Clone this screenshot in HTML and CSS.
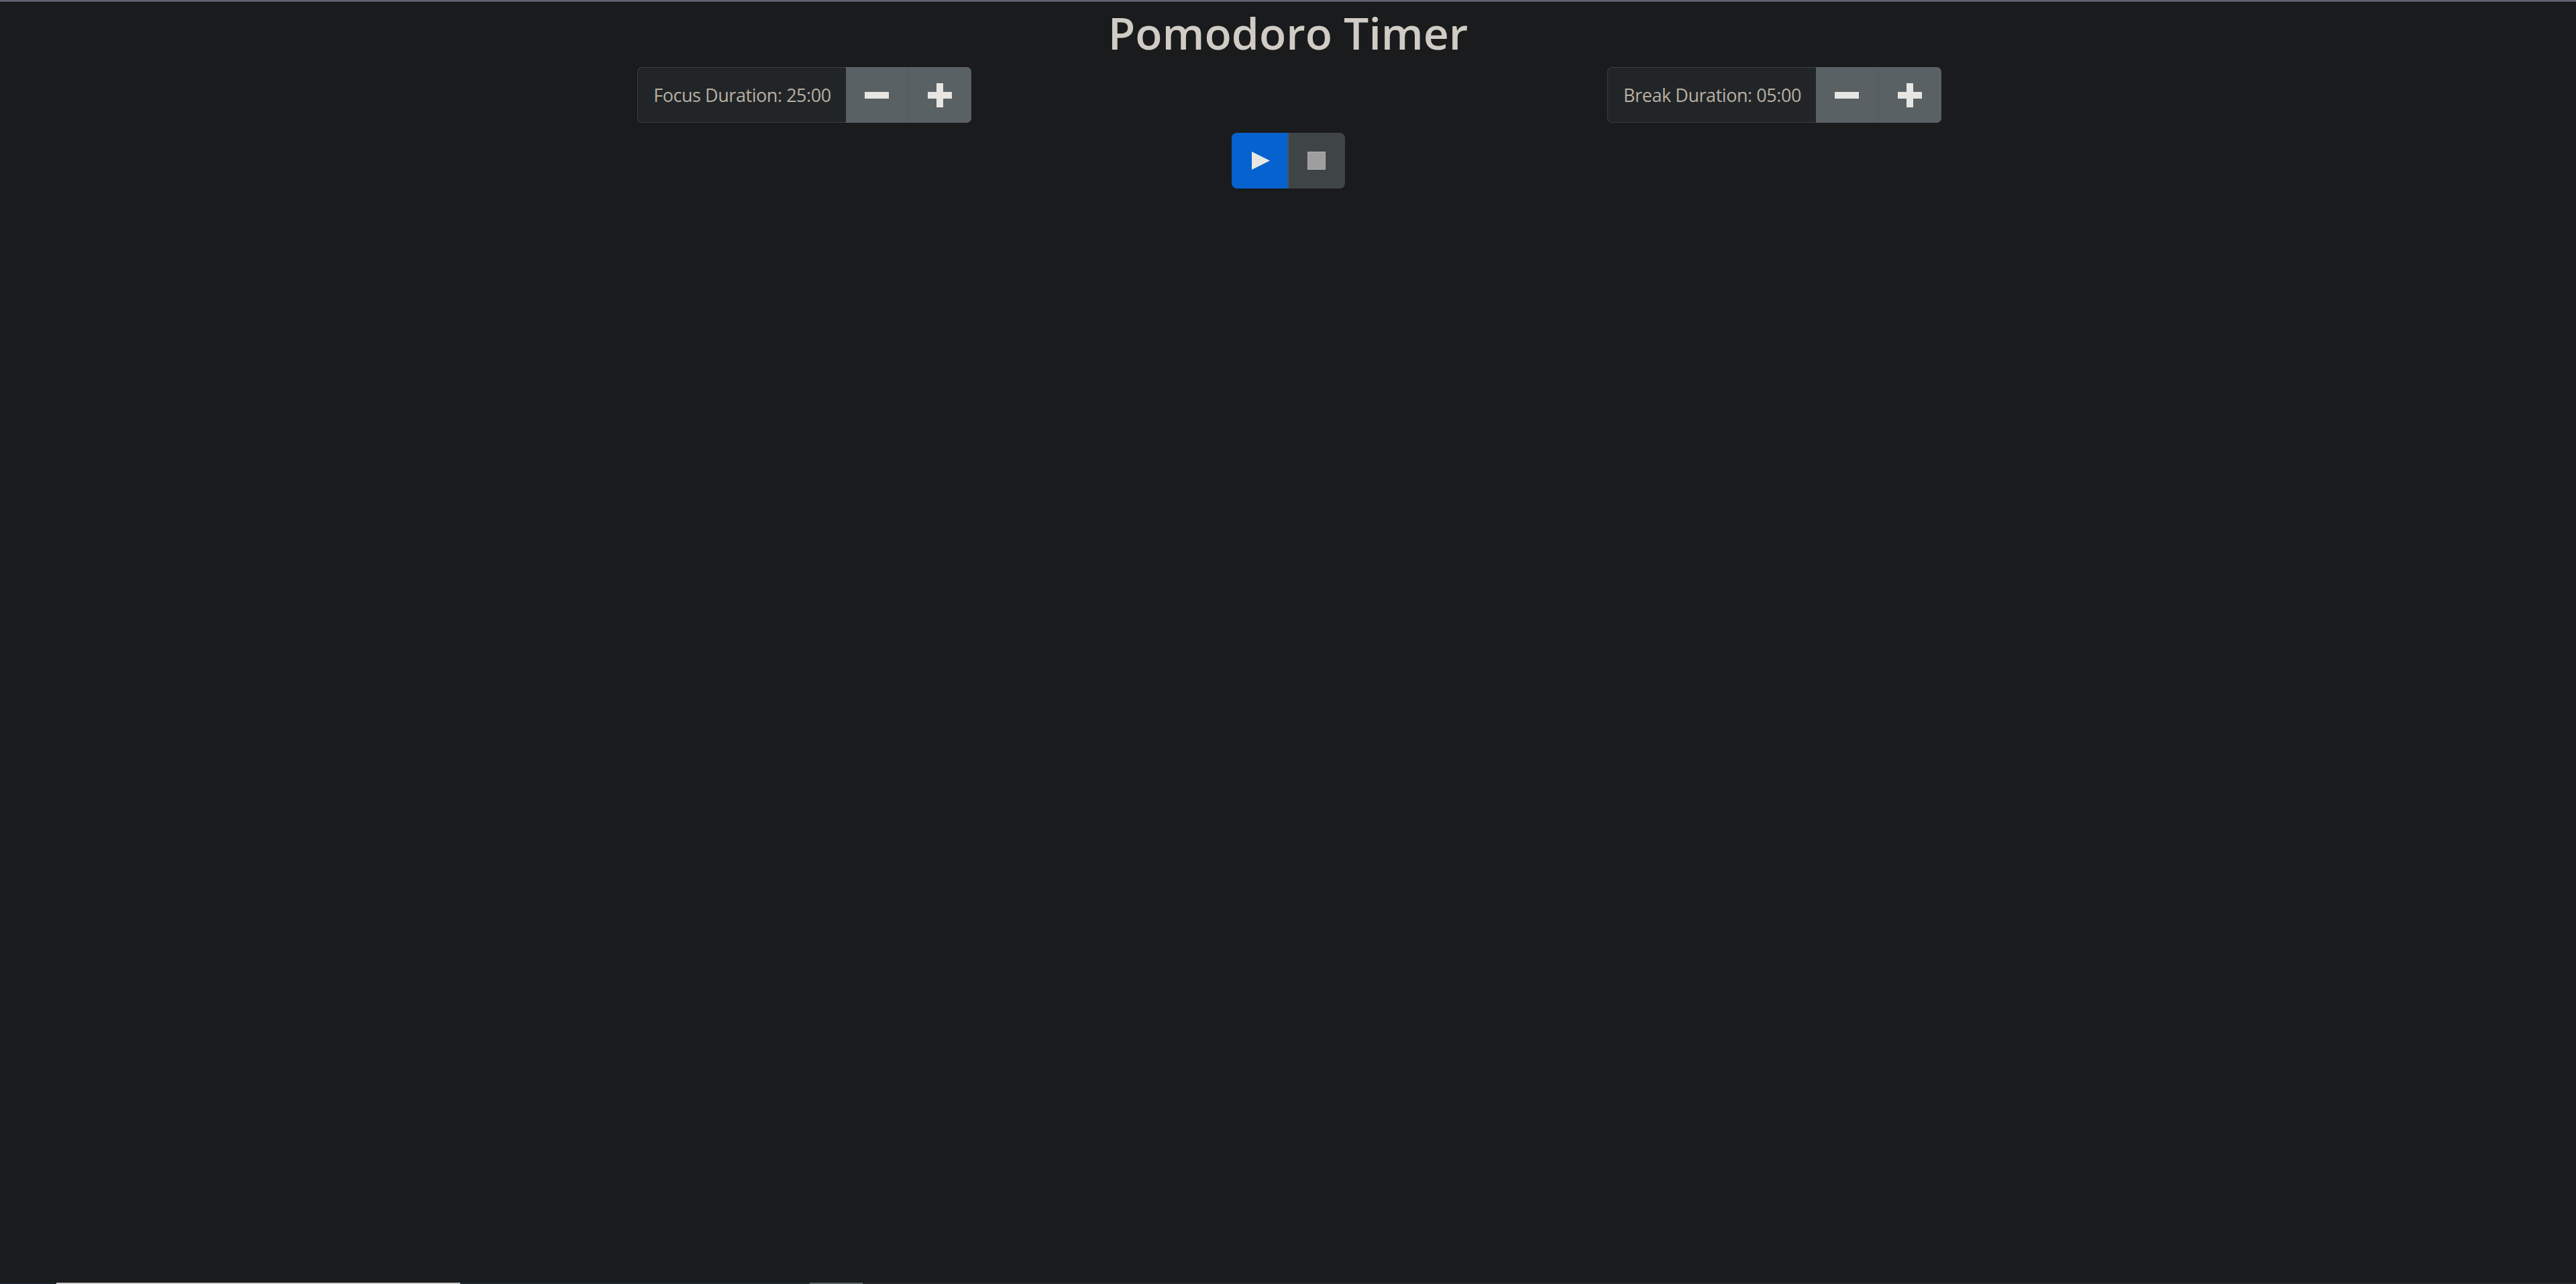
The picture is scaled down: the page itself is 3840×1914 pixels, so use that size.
FILE: index.html
```html
<!DOCTYPE html>
<html lang="en">
<head>
<meta charset="utf-8">
<title>Pomodoro Timer</title>
<link rel="stylesheet" href="styles.css">
</head>
<body>
<div class="topline"></div>
<main class="app">
  <h1 class="title">Pomodoro Timer</h1>
  <div class="settings">
    <div class="cell">
      <div class="group">
        <span class="label">Focus Duration: 25:00</span>
        <button class="btn btn-adj" aria-label="decrease"><svg viewBox="0 0 36 36" class="ico"><rect x="0" y="13" width="37" height="10" fill="currentColor"/></svg></button>
        <button class="btn btn-adj btn-last" aria-label="increase"><svg viewBox="0 0 36 36" class="ico"><rect x="0" y="13" width="36" height="10" fill="currentColor"/><rect x="13" y="0" width="10" height="36" fill="currentColor"/></svg></button>
      </div>
    </div>
    <div class="cell">
      <div class="group">
        <span class="label">Break Duration: 05:00</span>
        <button class="btn btn-adj" aria-label="decrease"><svg viewBox="0 0 36 36" class="ico"><rect x="0" y="13" width="37" height="10" fill="currentColor"/></svg></button>
        <button class="btn btn-adj btn-last" aria-label="increase"><svg viewBox="0 0 36 36" class="ico"><rect x="0" y="13" width="36" height="10" fill="currentColor"/><rect x="13" y="0" width="10" height="36" fill="currentColor"/></svg></button>
      </div>
    </div>
  </div>
  <div class="controls">
    <button class="btn btn-play" aria-label="start"><svg viewBox="0 0 27 27" class="ico-s"><polygon points="0,0 27,13.5 0,27" fill="#e8e6e3"/></svg></button>
    <button class="btn btn-stop" aria-label="stop"><svg viewBox="0 0 27 27" class="ico-s"><rect x="0.5" y="0.5" width="26" height="26" fill="#9e9e9e" stroke="#b0b0b0" stroke-width="1"/></svg></button>
  </div>
</main>
<div class="bottombar">
  <span class="seg seg-a"></span><span class="seg seg-b"></span><span class="seg seg-c"></span><span class="seg seg-d"></span><span class="seg seg-e"></span>
</div>
</body>
</html>
```
FILE: styles.css
```css
html, body {
  margin: 0;
  padding: 0;
  background: #1a1b1d;
  height: 100%;
  overflow: hidden;
}
body {
  font-family: "Open Sans", "Noto Sans", sans-serif;
  color: #d3cfc9;
}
.topline {
  height: 1px;
  background: #3a3a44;
  border-bottom: 1px solid #a2a2b8;
}
.app {
  display: flex;
  flex-direction: column;
  align-items: center;
}
.title {
  margin: 3px 0 0;
  font-size: 66px;
  font-weight: 600;
  line-height: 86px;
  height: 86px;
  color: #d0ccc5;
  letter-spacing: 0;
}
.settings {
  display: flex;
  width: 2892px;
  margin: 9px 0 0 4px;
}
.cell {
  flex: 1;
  display: flex;
  justify-content: center;
}
.group {
  display: flex;
  height: 83px;
}
.label {
  display: flex;
  align-items: center;
  box-sizing: border-box;
  padding: 0 22px 0 23px;
  font-size: 27px;
  color: #b8b0a4;
  background: #222527;
  border: 1px solid #3c4043;
  border-right: none;
  border-radius: 7px 0 0 7px;
  white-space: nowrap;
  letter-spacing: -0.45px;
}
.btn {
  border: none;
  margin: 0;
  padding: 0;
  display: flex;
  align-items: center;
  justify-content: center;
  cursor: pointer;
}
.btn-adj {
  width: 93px;
  background: #5a6165;
  color: #e8e6e3;
  border-right: 1px solid #51575b;
}
.btn-last {
  width: 94px;
  border-right: none;
  border-radius: 0 7px 7px 0;
}
.ico {
  width: 36px;
  height: 36px;
}
.controls {
  display: flex;
  margin-top: 15px;
  height: 83px;
}
.btn-play {
  width: 85px;
  background: #0562cf;
  border-radius: 8px 0 0 8px;
  border-right: 2px solid #3d5878;
}
.btn-stop {
  width: 84px;
  background: #3f4447;
  border-radius: 0 8px 8px 0;
}
.ico-s {
  width: 27px;
  height: 27px;
}
.btn-play .ico-s {
  margin-left: 4px;
}
.bottombar {
  position: fixed;
  left: 0;
  right: 0;
  bottom: 0;
  height: 2px;
  display: flex;
}
.seg { height: 2px; }
.seg-a { width: 84px; background: #1f2530; }
.seg-b { width: 602px; background: #c6c6c6; }
.seg-c { width: 521px; background: #1f2a30; }
.seg-d { width: 79px; background: #5b6569; }
.seg-e { flex: 1; background: #25282a; }
```
